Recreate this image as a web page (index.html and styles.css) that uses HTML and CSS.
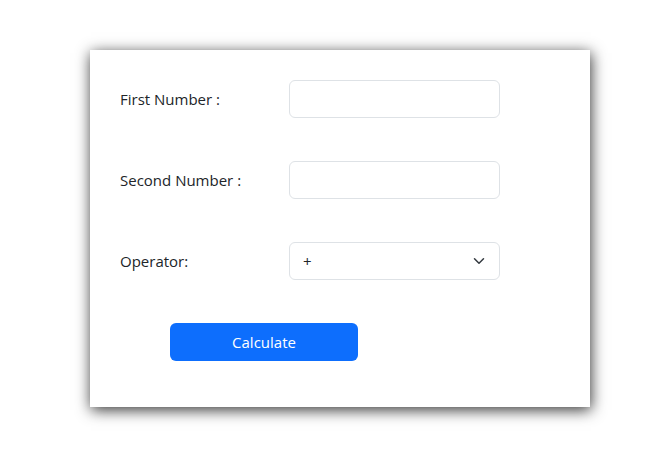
FILE: index.html
```html
<!DOCTYPE html>
<html>
<head>
<meta charset="utf-8">
<link rel="stylesheet" href="styles.css">
</head>
<body>
<div class="card">
  <div class="row">
    <label class="label">First Number :</label>
    <input class="field" type="text">
  </div>
  <div class="row">
    <label class="label">Second Number :</label>
    <input class="field" type="text">
  </div>
  <div class="row">
    <label class="label">Operator:</label>
    <div class="select-wrap">
      <select class="field select"><option>+</option></select>
      <svg class="chevron" width="16" height="12" viewBox="0 0 16 16"><path d="m2 5 6 6 6-6" fill="none" stroke="#343a40" stroke-width="2" stroke-linecap="round" stroke-linejoin="round"/></svg>
    </div>
  </div>
  <div class="actions">
    <button class="btn">Calculate</button>
  </div>
</div>
</body>
</html>
```
FILE: styles.css
```css
html, body { margin: 0; padding: 0; background: #fff; }
body { font-family: "Open Sans", "Noto Sans", sans-serif; font-size: 15px; color: #212529; min-height: 471px; padding-top: 50px; box-sizing: border-box; }
.card {
  margin: 0 0 0 90px;
  width: 500px;
  box-sizing: border-box;
  padding: 30px 30px 46px 30px;
  background: #fff;
  box-shadow: 1px 3px 14px rgba(0,0,0,0.8);
  display: flex;
  flex-direction: column;
  gap: 43px;
}
.row { display: flex; align-items: center; height: 38px; }
.label { width: 169px; flex: none; line-height: 1; }
.field {
  width: 211px; height: 38px; box-sizing: border-box;
  border: 1px solid #dee2e6; border-radius: 6px;
  background: #fff; font: inherit; color: #212529;
  padding: 0 12px; margin: 0; outline: none;
}
.select-wrap { position: relative; width: 211px; height: 38px; }
.select { appearance: none; -webkit-appearance: none; padding-left: 13px; }
.chevron { position: absolute; right: 13px; top: 13px; pointer-events: none; }
.actions { display: flex; padding-left: 50px; }
.btn {
  width: 188px; height: 38px; border: none; border-radius: 6px;
  background: #0d6efd; color: #fff; font: inherit; font-size: 15px; padding: 0;
}
```
